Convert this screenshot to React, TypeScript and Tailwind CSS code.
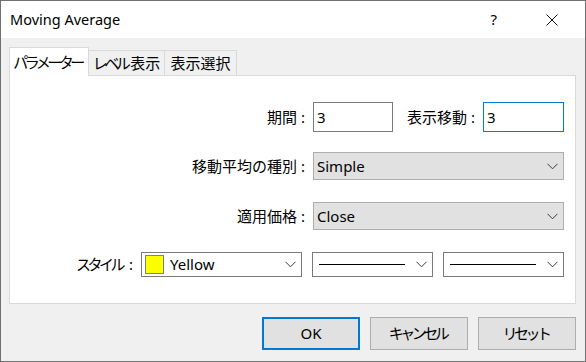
const font = "font-['Noto_Sans','Noto_Sans_CJK_JP',sans-serif]";

// katakana in the reference font is narrower than in Noto CJK
function K({ children }: { children: string }) {
  return <span className="tracking-[-3.5px] mr-[3px]">{children}</span>;
}

function Chevron() {
  return (
    <svg width="11" height="7" viewBox="0 0 11 7" className="shrink-0">
      <polyline points="0.5,0.8 5.5,5.8 10.5,0.8" fill="none" stroke="#3a3a3a" strokeWidth="1" />
    </svg>
  );
}

function Select({ value }: { value: string }) {
  return (
    <div className="w-[251px] h-[28px] bg-[#e1e1e1] border border-[#adadad] flex items-center pl-[3px] pr-[5px]">
      <span className="flex-1 text-[15px] leading-none">{value}</span>
      <Chevron />
    </div>
  );
}

function LineCombo() {
  return (
    <div className="w-[121px] h-[25px] bg-white border border-[#7a7a7a] flex items-center pl-[6px] pr-[5px]">
      <div className="w-[86px] h-px bg-black" />
      <div className="flex-1" />
      <Chevron />
    </div>
  );
}

function Label({ text, w }: { text: string; w: string }) {
  return <div className={`${w} text-right pr-[8px] text-[15px] leading-none whitespace-nowrap`}>{text}</div>;
}

export default function App() {
  return (
    <div className={`${font} w-[586px] h-[362px] border border-[#707070] bg-[#f0f0f0] text-black flex flex-col`}>
      <div className="h-[37px] bg-white flex items-center pl-[9px] shrink-0">
        <span className="text-[14.5px] flex-1">Moving Average</span>
        <span className="text-[15px] mr-[49px]">?</span>
        <svg width="12" height="12" viewBox="0 0 12 12" className="mr-[27px]">
          <path d="M0.5 0.5 L11.5 11.5 M11.5 0.5 L0.5 11.5" stroke="#111" strokeWidth="1" />
        </svg>
      </div>

      <div className="pl-[8px] pt-[9px] shrink-0">
        <div className="flex items-end h-[28px]">
          <div className="w-[80px] h-[29px] bg-white border border-b-0 border-[#d9d9d9] relative top-px flex items-center justify-center text-[15px] whitespace-nowrap z-10">
            <K>パラメーター</K>
          </div>
          <div className="w-[76px] h-[25px] border border-l-0 border-b-0 border-[#d9d9d9] flex items-center justify-center text-[15px] whitespace-nowrap">
            <K>レベル</K>表示
          </div>
          <div className="w-[72px] h-[25px] border border-l-0 border-b-0 border-[#d9d9d9] flex items-center justify-center text-[15px] whitespace-nowrap">表示選択</div>
        </div>
        <div className="w-[567px] h-[229px] bg-white border border-[#d9d9d9] pt-[26px] flex flex-col">
          <div className="flex items-center h-[30px]">
            <Label text="期間 :" w="w-[303px]" />
            <div className="w-[80px] h-[30px] border border-[#7a7a7a] pl-[3px] flex items-center text-[15px]">3</div>
            <Label text="表示移動 :" w="w-[90px]" />
            <div className="w-[81px] h-[30px] border border-[#0078d7] pl-[3px] flex items-center text-[15px]">3</div>
          </div>
          <div className="flex items-center mt-[20px]">
            <Label text="移動平均の種別 :" w="w-[303px]" />
            <Select value="Simple" />
          </div>
          <div className="flex items-center mt-[22px]">
            <Label text="適用価格 :" w="w-[303px]" />
            <Select value="Close" />
          </div>
          <div className="flex items-center mt-[22px] gap-[10px]">
            <div className="w-[123px] text-right text-[15px] leading-none whitespace-nowrap -mr-[2px]">
              <K>スタイル</K> :
            </div>
            <div className="w-[161px] h-[25px] bg-white border border-[#7a7a7a] flex items-center pl-[3px] pr-[5px]">
              <div className="w-[19px] h-[19px] bg-[#ffff00] border border-[#808080]" />
              <span className="flex-1 pl-[6px] text-[15px] leading-none">Yellow</span>
              <Chevron />
            </div>
            <LineCombo />
            <LineCombo />
          </div>
        </div>
      </div>

      <div className="flex justify-end gap-[10px] pr-[9px] mt-[13px]">
        <button className="w-[98px] h-[33px] bg-[#e1e1e1] border-2 border-[#0078d7] text-[15px]">OK</button>
        <button className="w-[98px] h-[33px] bg-[#e1e1e1] border border-[#adadad] text-[15px]">
          <K>キャンセル</K>
        </button>
        <button className="w-[98px] h-[33px] bg-[#e1e1e1] border border-[#adadad] text-[15px]">
          <K>リセット</K>
        </button>
      </div>
    </div>
  );
}
